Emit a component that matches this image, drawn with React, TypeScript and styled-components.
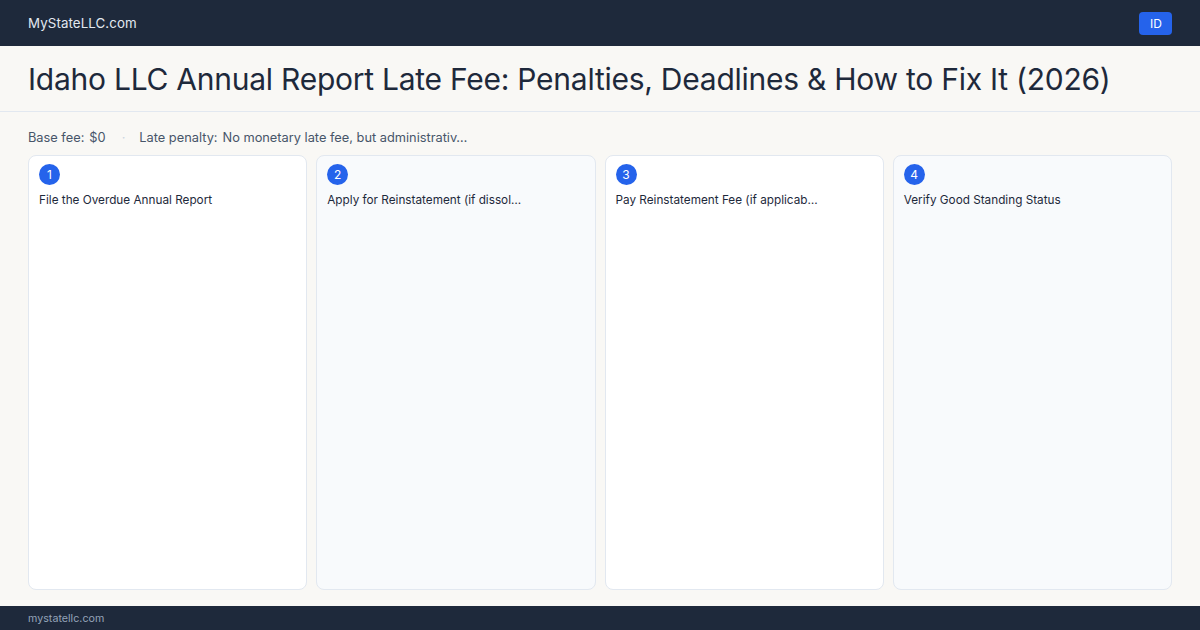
import React from "react";
import styled, { createGlobalStyle } from "styled-components";

const Global = createGlobalStyle`
  html, body { margin: 0; padding: 0; }
  body {
    width: 1200px;
    height: 630px;
    overflow: hidden;
    background: #f9f8f5;
    font-family: Inter, "Noto Sans", sans-serif;
    color: #1e293b;
  }
  * { box-sizing: border-box; }
`;

const Page = styled.div`
  width: 1200px;
  height: 630px;
  display: flex;
  flex-direction: column;
`;

const TopBar = styled.header`
  height: 46px;
  flex: none;
  background: #1e293b;
  display: flex;
  align-items: center;
  justify-content: space-between;
  padding: 0 28px;
`;

const Brand = styled.div`
  color: #e2e8f0;
  font-size: 13.3px;
  letter-spacing: 0.1px;
`;

const StateBadge = styled.div`
  background: #2563eb;
  color: #ffffff;
  font-size: 12px;
  height: 23px;
  padding: 0 10px 0 11px;
  border-radius: 4px;
  display: flex;
  align-items: center;
`;

const TitleBar = styled.div`
  flex: none;
  height: 66px;
  padding: 0 28px;
  display: flex;
  align-items: center;
  border-bottom: 1px solid #e2e8f0;
`;

const Title = styled.h1`
  margin: 0;
  font-size: 30px;
  font-weight: 400;
  letter-spacing: -0.25px;
  color: #1e293b;
  white-space: nowrap;
`;

const Main = styled.main`
  flex: 1;
  display: flex;
  flex-direction: column;
  padding: 17px 28px 16px 28px;
  gap: 10px;
  min-height: 0;
`;

const Meta = styled.div`
  display: flex;
  align-items: center;
  font-size: 12.8px;
  color: #475569;
  height: 16px;
`;

const MetaItem = styled.span`
  display: inline-flex;
  gap: 5px;
`;

const Dot = styled.span`
  color: #cbd5e1;
  margin: 0 14px 0 16px;
`;

const Steps = styled.div`
  flex: 1;
  display: grid;
  grid-template-columns: repeat(4, 1fr);
  gap: 9px;
  min-height: 0;
`;

const Card = styled.div<{ $alt: boolean }>`
  background: ${(p) => (p.$alt ? "#f8fafc" : "#ffffff")};
  border: 1px solid #e2e8f0;
  border-radius: 8px;
  padding: 8px 10px;
  display: flex;
  flex-direction: column;
  align-items: flex-start;
  gap: 7px;
  min-width: 0;
`;

const Num = styled.div`
  width: 21px;
  height: 21px;
  border-radius: 50%;
  background: #2563eb;
  color: #ffffff;
  font-size: 12px;
  display: flex;
  align-items: center;
  justify-content: center;
`;

const StepTitle = styled.div`
  font-size: 11.75px;
  color: #1e293b;
  line-height: 16px;
`;

const Footer = styled.footer`
  height: 24px;
  flex: none;
  background: #1e293b;
  color: #94a3b8;
  font-size: 10.7px;
  display: flex;
  align-items: center;
  padding: 0 28px;
`;

const steps = [
  "File the Overdue Annual Report",
  "Apply for Reinstatement (if dissol…",
  "Pay Reinstatement Fee (if applicab…",
  "Verify Good Standing Status",
];

export default function App() {
  return (
    <>
      <Global />
      <Page>
        <TopBar>
          <Brand>MyStateLLC.com</Brand>
          <StateBadge>ID</StateBadge>
        </TopBar>
        <TitleBar>
          <Title>Idaho LLC Annual Report Late Fee: Penalties, Deadlines &amp; How to Fix It (2026)</Title>
        </TitleBar>
        <Main>
          <Meta>
            <MetaItem>
              <span>Base fee:</span>
              <span>$0</span>
            </MetaItem>
            <Dot>·</Dot>
            <MetaItem>
              <span>Late penalty:</span>
              <span>No monetary late fee, but administrativ…</span>
            </MetaItem>
          </Meta>
          <Steps>
            {steps.map((s, i) => (
              <Card key={i} $alt={i % 2 === 1}>
                <Num>{i + 1}</Num>
                <StepTitle>{s}</StepTitle>
              </Card>
            ))}
          </Steps>
        </Main>
        <Footer>mystatellc.com</Footer>
      </Page>
    </>
  );
}
